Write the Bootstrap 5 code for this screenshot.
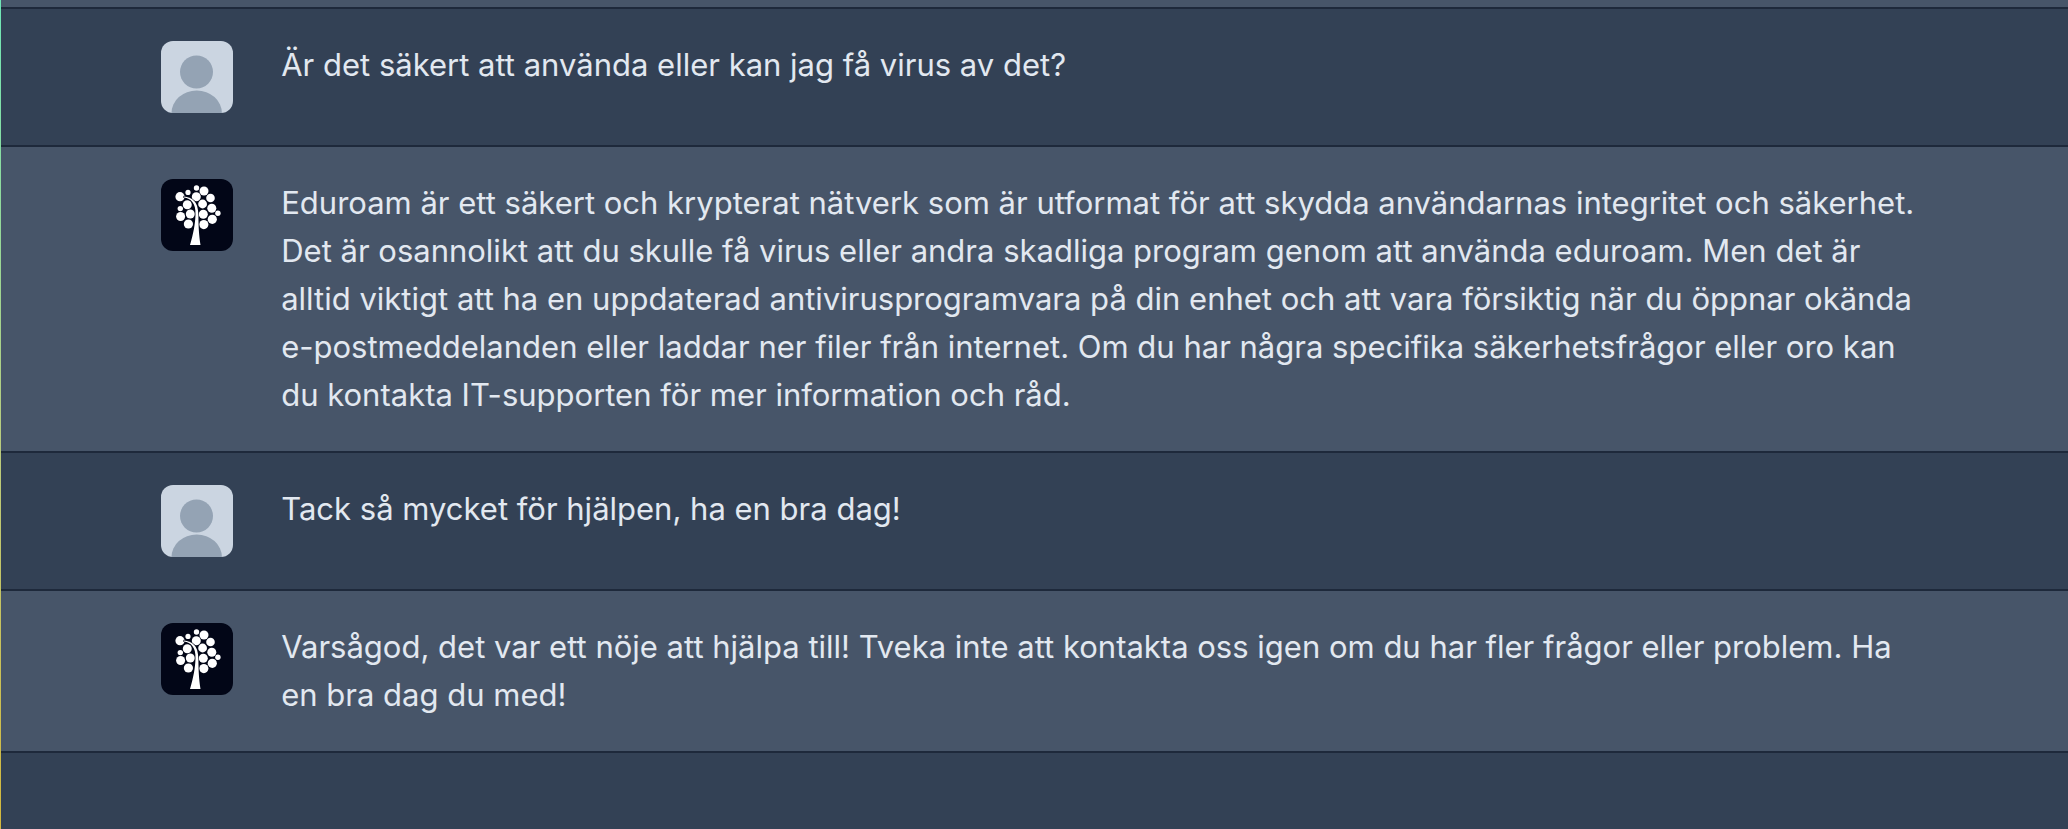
<!DOCTYPE html>
<html lang="sv">
<head>
<meta charset="utf-8">
<meta name="viewport" content="width=device-width, initial-scale=1">
<title>Chatt</title>
<link href="https://cdn.jsdelivr.net/npm/bootstrap@5.3.0/dist/css/bootstrap.min.css" rel="stylesheet">
<style>
  body { background: #334155; color: #e2e8f0; font-family: Inter, "Liberation Sans", sans-serif; font-size: 31px; line-height: 48px; }
  .chat-log { border-left: 1px solid; border-image: linear-gradient(#6ee7b7, #bccb7c 55%, #d4b83c) 1; }
  .message { border-bottom: 2px solid #1e293b; padding: 32px 7% 32px 7.75%; gap: 48px; }
  .message-bot { background: #475569; }
  .message-tail { padding: 7px 0 0; }
  .avatar { width: 72px; height: 72px; border-radius: 12px; }
</style>
</head>
<body>
<svg class="d-none" aria-hidden="true">
  <symbol id="person" viewBox="0 0 72 72">
    <rect width="72" height="72" fill="#cbd5e1"/>
    <g fill="#94a3b4"><circle cx="35.5" cy="31" r="16.5"/><path d="M10.5 72a25.2 22.5 0 0 1 50.4 0z"/></g>
  </symbol>
  <symbol id="tree" viewBox="0 0 72 72">
    <rect width="72" height="72" fill="#020617"/>
    <g fill="#fff">
      <circle cx="19" cy="17.7" r="4.6"/><circle cx="27" cy="13.4" r="2.6"/><circle cx="35.5" cy="9" r="2.7"/>
      <circle cx="43" cy="12" r="4.5"/><circle cx="35.3" cy="17.7" r="4.5"/><circle cx="49.5" cy="19" r="4.3"/>
      <circle cx="26.3" cy="25.7" r="4.5"/><circle cx="41.6" cy="25" r="4.4"/><circle cx="50.8" cy="29.3" r="4.5"/>
      <circle cx="19.3" cy="29.6" r="2.7"/><circle cx="29.3" cy="35" r="4.5"/><circle cx="42.3" cy="35.2" r="4.5"/>
      <circle cx="56.9" cy="34.3" r="2.7"/><circle cx="19.6" cy="37.5" r="4.5"/><circle cx="51.3" cy="40.3" r="4.6"/>
      <circle cx="27.4" cy="45" r="4.6"/><circle cx="42.8" cy="45.6" r="4.6"/>
    </g>
    <path d="M23 17.5C31 18.5 37.3 22 37.4 36C37.5 48 38 56 39.5 66H29C32.5 54 34 46 34.5 36C35 24 30 19.5 23 18.5z" fill="#fff" stroke="#020617" stroke-width="1.2" paint-order="stroke"/>
  </symbol>
</svg>
<main class="chat-log min-vh-100">
  <div class="message message-bot message-tail"></div>
  <article class="message d-flex align-items-start">
    <svg class="avatar flex-shrink-0" role="img" aria-label="Användare"><use href="#person"/></svg>
    <p class="mb-0">Är det säkert att använda eller kan jag få virus av det?</p>
  </article>
  <article class="message message-bot d-flex align-items-start">
    <svg class="avatar flex-shrink-0" role="img" aria-label="Assistent"><use href="#tree"/></svg>
    <p class="mb-0">Eduroam är ett säkert och krypterat nätverk som är utformat för att skydda användarnas integritet och säkerhet. Det är osannolikt att du skulle få virus eller andra skadliga program genom att använda eduroam. Men det är alltid viktigt att ha en uppdaterad antivirusprogramvara på din enhet och att vara försiktig när du öppnar okända e-postmeddelanden eller laddar ner filer från internet. Om du har några specifika säkerhetsfrågor eller oro kan du kontakta IT-supporten för mer information och råd.</p>
  </article>
  <article class="message d-flex align-items-start">
    <svg class="avatar flex-shrink-0" role="img" aria-label="Användare"><use href="#person"/></svg>
    <p class="mb-0">Tack så mycket för hjälpen, ha en bra dag!</p>
  </article>
  <article class="message message-bot d-flex align-items-start">
    <svg class="avatar flex-shrink-0" role="img" aria-label="Assistent"><use href="#tree"/></svg>
    <p class="mb-0">Varsågod, det var ett nöje att hjälpa till! Tveka inte att kontakta oss igen om du har fler frågor eller problem. Ha en bra dag du med!</p>
  </article>
</main>
<script src="https://cdn.jsdelivr.net/npm/bootstrap@5.3.0/dist/js/bootstrap.bundle.min.js"></script>
</body>
</html>
